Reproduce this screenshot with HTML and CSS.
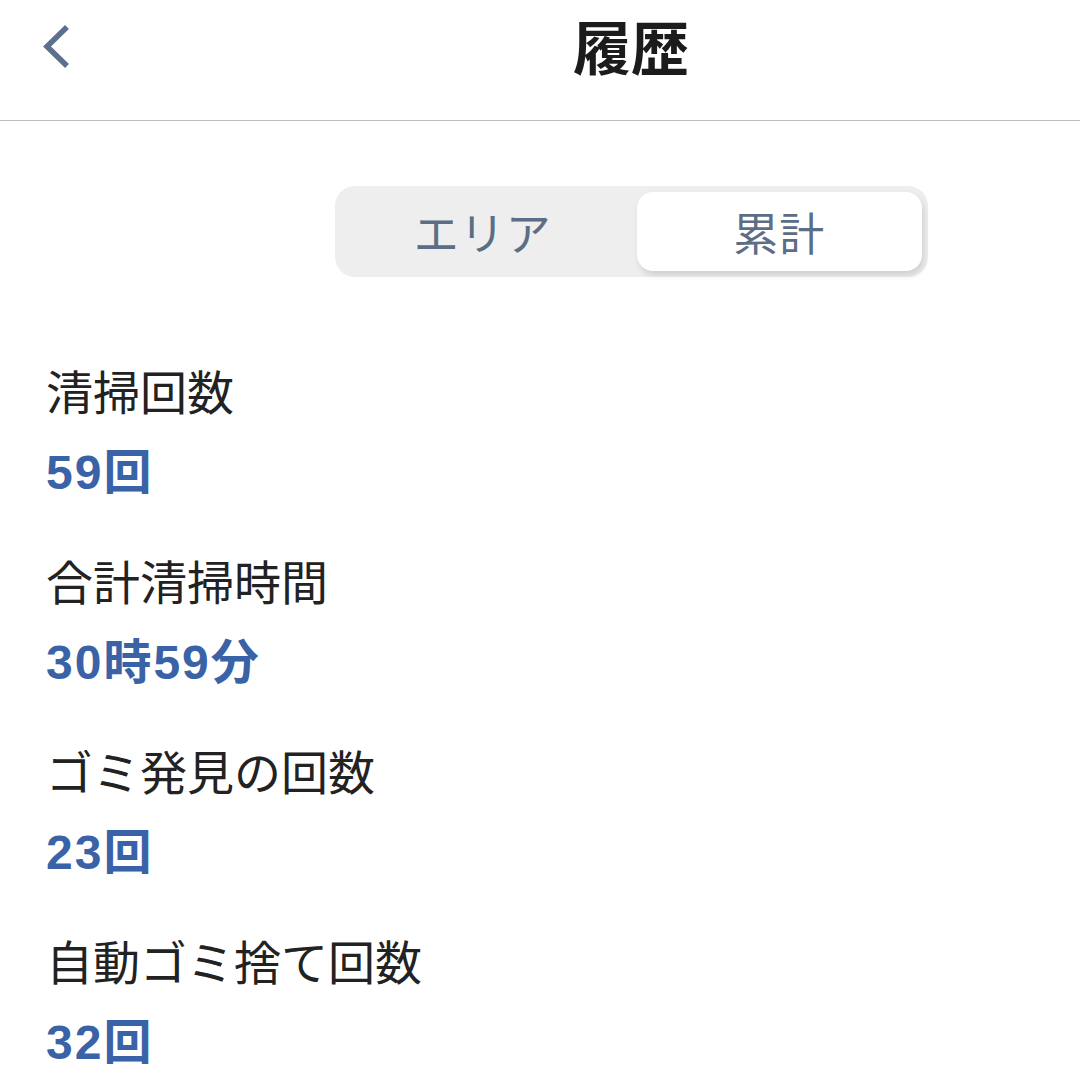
FILE: index.html
```html
<!DOCTYPE html>
<html lang="ja">
<head>
<meta charset="utf-8">
<title>履歴</title>
<link rel="stylesheet" href="styles.css">
</head>
<body>
<header class="nav">
  <button class="back" aria-label="戻る">
    <svg width="40" height="48" viewBox="0 0 40 48"><path d="M27 5 L7 24.5 L27 44" fill="none" stroke="#5c6f8c" stroke-width="5.5" stroke-linecap="butt" stroke-linejoin="miter"/></svg>
  </button>
  <h1 class="title">履歴</h1>
</header>
<main class="content">
  <div class="seg-wrap">
    <div class="segmented">
      <div class="seg">エリア</div>
      <div class="seg active">累計</div>
    </div>
  </div>
  <ul class="stats">
    <li class="stat"><div class="label">清掃回数</div><div class="value">59回</div></li>
    <li class="stat"><div class="label">合計清掃時間</div><div class="value">30時59分</div></li>
    <li class="stat"><div class="label">ゴミ発見の回数</div><div class="value">23回</div></li>
    <li class="stat"><div class="label">自動ゴミ捨て回数</div><div class="value">32回</div></li>
  </ul>
</main>
</body>
</html>
```
FILE: styles.css
```css
* { box-sizing: border-box; }
html, body {
  margin: 0;
  padding: 0;
  background: #ffffff;
  font-family: "Noto Sans CJK JP", "Noto Sans", sans-serif;
  overflow: hidden;
}
.nav {
  position: relative;
  height: 121px;
  border-bottom: 1.5px solid #bdbdbd;
  display: flex;
  align-items: flex-start;
}
.back {
  position: absolute;
  left: 40px;
  top: 22px;
  padding: 0;
  border: 0;
  background: none;
  display: flex;
}
.title {
  margin: 0;
  width: 100%;
  padding-left: 182px;
  text-align: center;
  font-size: 58px;
  font-weight: 600;
  color: #1c1c1c;
  line-height: 90px;
}
.content {
  padding: 65px 0 0 46px;
}
.seg-wrap {
  display: flex;
  justify-content: center;
  padding-left: 136px;
}
.segmented {
  width: 593px;
  height: 91px;
  background: #eeeeef;
  border-radius: 20px;
  padding: 6px;
  display: grid;
  grid-template-columns: 1fr 1fr;
  gap: 12px;
}
.seg {
  display: flex;
  align-items: center;
  justify-content: center;
  font-size: 45px;
  color: #5c6e86;
  border-radius: 16px;
  letter-spacing: 1px;
}
.seg.active {
  background: #ffffff;
  box-shadow: 2px 4px 6px rgba(0, 0, 0, 0.13);
}
.stats {
  list-style: none;
  margin: 85px 0 0;
  padding: 0;
  display: flex;
  flex-direction: column;
  gap: 51px;
}
.stat {
  display: flex;
  flex-direction: column;
  gap: 27px;
}
.label {
  font-size: 47px;
  line-height: 56px;
  color: #222222;
}
.value {
  font-family: "Liberation Sans", "Noto Sans CJK JP", sans-serif;
  font-size: 48px;
  font-weight: 700;
  line-height: 56px;
  letter-spacing: 2px;
  color: #3a62a6;
}
```
